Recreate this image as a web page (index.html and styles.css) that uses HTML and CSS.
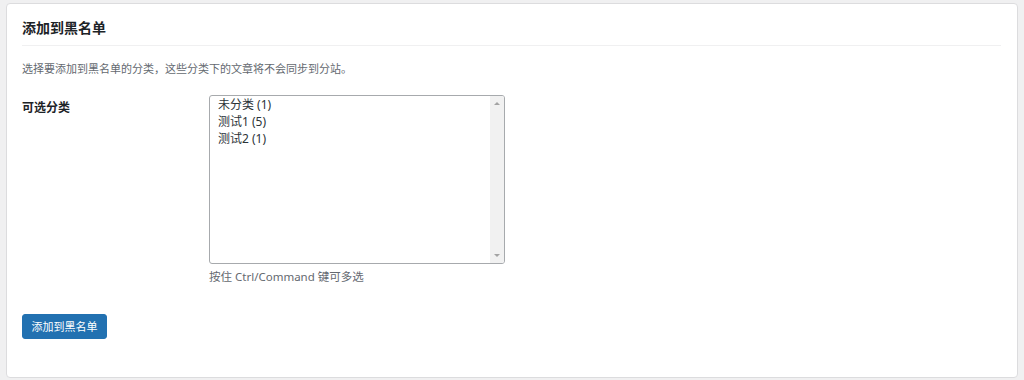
FILE: index.html
```html
<!DOCTYPE html>
<html lang="zh-CN">
<head>
<meta charset="utf-8">
<title>添加到黑名单</title>
<link rel="stylesheet" href="styles.css">
</head>
<body>
<div class="card">
  <h2 class="title">添加到黑名单</h2>
  <p class="desc">选择要添加到黑名单的分类，这些分类下的文章将不会同步到分站。</p>
  <div class="row">
    <div class="label">可选分类</div>
    <div class="field">
      <div class="listbox">
        <ul class="options">
          <li>未分类 (1)</li>
          <li>测试1 (5)</li>
          <li>测试2 (1)</li>
        </ul>
        <div class="scrollbar">
          <span class="arrow up"></span>
          <span class="arrow down"></span>
        </div>
      </div>
      <p class="help">按住 Ctrl/Command 键可多选</p>
    </div>
  </div>
  <button class="btn" type="button">添加到黑名单</button>
</div>
</body>
</html>
```

FILE: styles.css
```css
html, body {
  margin: 0;
  padding: 0;
}
body {
  background: #f0f0f1;
  padding: 3px 6px 2px 6px;
  font-family: "Noto Sans", "Noto Sans CJK SC", sans-serif;
  color: #1d2327;
}
.card {
  background: #fff;
  border: 1px solid #dcdcde;
  border-radius: 4px;
  height: 375px;
  box-sizing: border-box;
  padding: 14px 16px 0 15px;
}
.title {
  margin: 0;
  font-size: 14px;
  line-height: 20px;
  font-weight: 700;
  color: #1d2327;
  padding-bottom: 7px;
  border-bottom: 1px solid #f0f0f1;
}
.desc {
  margin: 15px 0 0 0;
  font-size: 11px;
  line-height: 16px;
  color: #646970;
}
.row {
  display: flex;
  margin-top: 18px;
}
.label {
  width: 187px;
  flex: none;
  font-size: 12px;
  line-height: 16px;
  font-weight: 700;
  padding-top: 5px;
  color: #1d2327;
}
.field {
  display: flex;
  flex-direction: column;
}
.listbox {
  width: 296px;
  height: 169px;
  box-sizing: border-box;
  border: 1px solid #a7aaad;
  border-radius: 3px;
  display: flex;
  overflow: hidden;
}
.options {
  list-style: none;
  margin: 0;
  padding: 0 0 0 8px;
  flex: 1;
  font-size: 12px;
  line-height: 17px;
  color: #2c3338;
}
.scrollbar {
  width: 14px;
  background: #f1f1f1;
  display: flex;
  flex-direction: column;
  justify-content: space-between;
  align-items: center;
  padding: 6px 0;
}
.arrow {
  width: 0;
  height: 0;
  border-left: 3px solid transparent;
  border-right: 3px solid transparent;
}
.arrow.up {
  border-bottom: 3px solid #a3a3a3;
}
.arrow.down {
  border-top: 3px solid #a3a3a3;
}
.help {
  margin: 5px 0 0 0;
  font-size: 11.5px;
  line-height: 16px;
  color: #646970;
}
.btn {
  margin-top: 29px;
  display: block;
  width: 85px;
  height: 25px;
  padding: 0;
  background: #2271b1;
  border: 1px solid #2271b1;
  border-radius: 3px;
  color: #fff;
  font-family: "Noto Sans", "Noto Sans CJK SC", sans-serif;
  font-size: 11px;
  line-height: 23px;
}
```
